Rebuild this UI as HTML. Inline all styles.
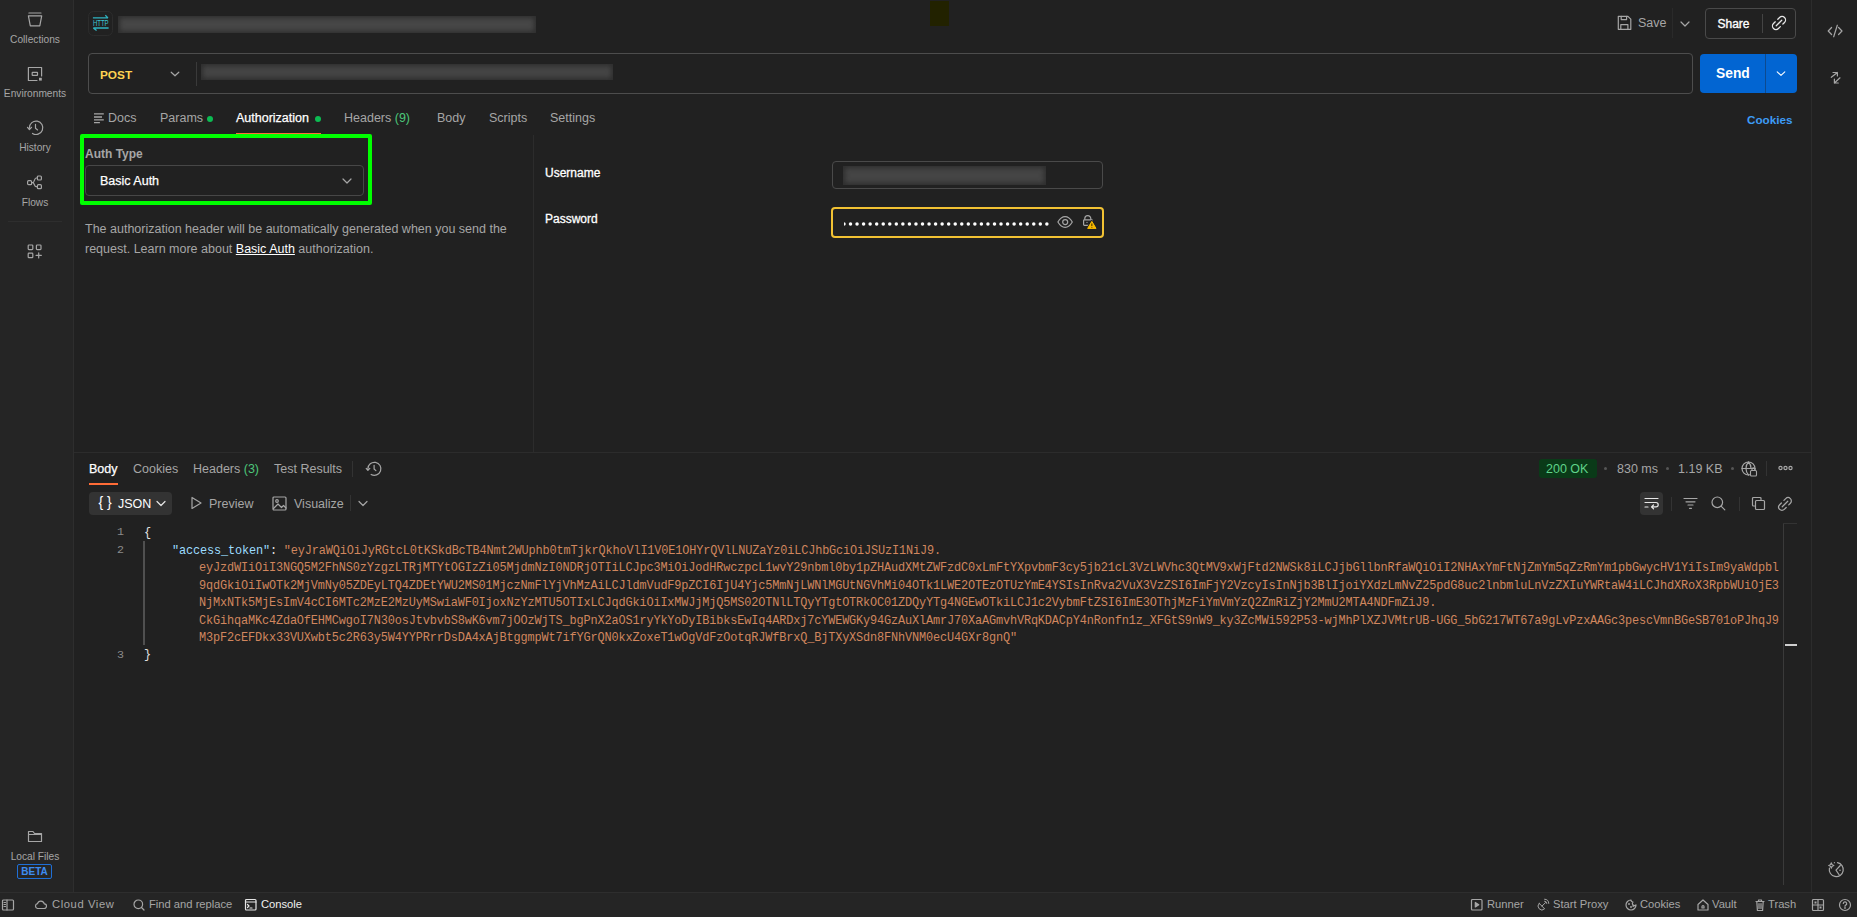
<!DOCTYPE html>
<html><head><meta charset="utf-8">
<style>
*{box-sizing:border-box;margin:0;padding:0}
html,body{width:1857px;height:917px;overflow:hidden;background:#212121;font-family:"Liberation Sans",sans-serif;color:#a6a6a6}
.a{position:absolute;white-space:nowrap}
svg.i{position:absolute;overflow:visible}
.ic{fill:none;stroke:#a6a6a6;stroke-width:1.2;stroke-linecap:round;stroke-linejoin:round}
.sb{font-size:10.2px;color:#a6a6a6;text-align:center;width:70px;left:0}
.tab{font-size:12.5px;top:111px;color:#a6a6a6}
.dot{width:6px;height:6px;border-radius:3px;background:#0cbb52;position:absolute}
.mono{font-family:"Liberation Mono",monospace;font-size:11.9px;letter-spacing:-0.145px;color:#d0865e;line-height:17.5px}
.ln{font-family:"Liberation Mono",monospace;font-size:11.67px;color:#8a8a8a;text-align:right;width:30px;left:94px;line-height:17.5px}
.st{font-size:11.2px;color:#a6a6a6;top:898px}
.blur{position:absolute;background:#3a3a3a;filter:blur(2px);border-radius:2px}
</style></head><body>
<!-- borders -->
<div class="a" style="left:0;top:0;width:73px;height:892px;background:#252525"></div>
<div class="a" style="left:0;top:892px;width:1857px;height:25px;background:#252525"></div>
<div class="a" style="left:73px;top:0;width:1px;height:892px;background:#2e2e2e"></div>
<div class="a" style="left:1811px;top:0;width:1px;height:892px;background:#2c2c2c"></div>
<div class="a" style="left:0;top:892px;width:1857px;height:1px;background:#2e2e2e"></div>

<!-- ===== LEFT SIDEBAR ===== -->
<svg class="i" style="left:27px;top:12px" width="16" height="16" viewBox="0 0 16 16"><g class="ic"><path d="M1.9 1h12.1M1.4 3.8h13.3l-1.9 10.1H3.3z"/></g></svg>
<div class="a sb" style="top:34px">Collections</div>
<svg class="i" style="left:27px;top:66px" width="16" height="16" viewBox="0 0 16 16"><g class="ic"><path d="M14.6 10V1.5H1.4v13H10"/><rect x="5.2" y="6.4" width="5.3" height="3" rx=".4"/></g><rect x="12" y="11.8" width="2.8" height="2.8" fill="#a6a6a6"/></svg>
<div class="a sb" style="top:88px">Environments</div>
<svg class="i" style="left:27px;top:120px" width="16" height="16" viewBox="0 0 16 16"><g class="ic"><path d="M2.4 7.8A6.7 6.7 0 1 1 5.5 13.4"/><path d="M.5 7.3l1.9 2.2 2.1-2.2"/><path d="M8.5 4.4v3.9l2.1 1.6"/></g></svg>
<div class="a sb" style="top:142px">History</div>
<svg class="i" style="left:27px;top:174px" width="16" height="16" viewBox="0 0 16 16"><g class="ic"><rect x="0.6" y="6.7" width="4" height="4" rx="1"/><rect x="10.4" y="2" width="4" height="4" rx="1"/><rect x="10.4" y="10.7" width="4" height="4" rx="1"/><path d="M4.6 8.7h1.2c1.6 0 1.6-4.7 3.2-4.7h1.4M5.8 8.7c1.6 0 1.6 4 3.2 4h1.4"/></g></svg>
<div class="a sb" style="top:197px">Flows</div>
<div class="a" style="left:8px;top:221px;width:54px;height:1px;background:#2e2e2e"></div>
<svg class="i" style="left:27px;top:243px" width="16" height="16" viewBox="0 0 16 16"><g class="ic"><rect x="1.2" y="2" width="4.6" height="4.6" rx=".8"/><rect x="9.4" y="2" width="4.6" height="4.6" rx=".8"/><rect x="1.2" y="10.1" width="4.6" height="4.6" rx=".8"/><path d="M11.7 9.8v5.2M9.1 12.4h5.2"/></g></svg>

<svg class="i" style="left:27px;top:828px" width="16" height="16" viewBox="0 0 16 16"><g class="ic"><path d="M1.5 3.5v10h13V5.5H7.5L6 3.5z M1.5 6.5h13"/></g></svg>
<div class="a sb" style="top:851px">Local Files</div>
<div class="a" style="left:17px;top:864px;width:35px;height:15px;border:1px solid #1f6fd6;border-radius:2px;color:#3d8cf0;font-size:10px;font-weight:bold;text-align:center;line-height:13px">BETA</div>

<!-- ===== RIGHT SIDEBAR ===== -->
<svg class="i" style="left:1827px;top:23px" width="16" height="16" viewBox="0 0 16 16"><g class="ic"><path d="M4.6 4.5L1.2 8l3.4 3.5M11.6 4.5L15 8l-3.4 3.5M10.3 2.2L6.7 13.8"/></g></svg>
<svg class="i" style="left:1827px;top:69px" width="16" height="16" viewBox="0 0 16 16"><g class="ic"><path d="M6 3.5h4.4v3.5M10.4 3.5L4.3 8.3M7.4 10V14H11.3M7.4 14L13 8.8"/></g></svg>
<svg class="i" style="left:1827px;top:861px" width="16" height="16" viewBox="0 0 16 16"><g class="ic"><path d="M10.5 1.7A7 7 0 1 1 2.4 7.2"/><path d="M13.3 4.5L9 9.2l3.3 4.8"/><path d="M4.3 1.9Q4.6 4.2 6.9 4.5 4.6 4.8 4.3 7.1 4 4.8 1.7 4.5 4 4.2 4.3 1.9z"/></g><circle cx="13" cy="9.2" r=".8" fill="#a6a6a6"/><circle cx="7.4" cy="1.7" r=".6" fill="#a6a6a6"/></svg>

<!-- ===== STATUS BAR ===== -->
<svg class="i" style="left:2px;top:899px" width="12" height="12" viewBox="0 0 12 12"><g class="ic"><rect x="0.5" y="1" width="11" height="10" rx="1"/><path d="M5 1v10M2 3.5h1.5M2 5.5h1.5M2 7.5h1.5"/></g></svg>
<svg class="i" style="left:34px;top:899px" width="13" height="12" viewBox="0 0 13 12"><g class="ic"><path d="M3.5 9.5h6.5a2.3 2.3 0 0 0 .3-4.6A3.5 3.5 0 0 0 3.5 4.6 2.5 2.5 0 0 0 3.5 9.5z"/></g></svg>
<div class="a st" style="left:52px;letter-spacing:0.6px">Cloud View</div>
<svg class="i" style="left:133px;top:899px" width="12" height="12" viewBox="0 0 12 12"><g class="ic"><circle cx="5.3" cy="5.3" r="4.3"/><path d="M8.5 8.5l2.5 2.5"/></g></svg>
<div class="a st" style="left:149px">Find and replace</div>
<svg class="i" style="left:245px;top:899px" width="12" height="12" viewBox="0 0 12 12"><g class="ic" style="stroke:#e6e6e6"><rect x="0.5" y="0.5" width="10.5" height="10.5" rx="1"/><path d="M0.5 3h10.5M2.5 5.5l1.5 1.5-1.5 1.5M5 9h2"/></g></svg>
<div class="a st" style="left:261px;color:#f0f0f0">Console</div>

<svg class="i" style="left:1471px;top:899px" width="12" height="12" viewBox="0 0 12 12"><g class="ic"><rect x="0.5" y="0.5" width="10.5" height="10.5" rx="1"/><path d="M4.3 3.5v4.5l3.5-2.2z" fill="#a6a6a6"/></g></svg>
<div class="a st" style="left:1487px">Runner</div>
<svg class="i" style="left:1538px;top:898px" width="12" height="12" viewBox="0 0 12 12"><g class="ic" style="stroke-width:1"><path d="M1.2 5.4L6.6 10.8A3.8 3.8 0 0 1 1.2 5.4z"/><path d="M4 8.1L7.6 4.5"/><path d="M6.6 1.2A4.3 4.3 0 0 1 10.8 5.4M6.6 3.2A2.3 2.3 0 0 1 8.8 5.4"/></g></svg>
<div class="a st" style="left:1553px">Start Proxy</div>
<svg class="i" style="left:1625px;top:899px" width="12" height="12" viewBox="0 0 12 12"><g class="ic"><path d="M11 6A5 5 0 1 1 6 1a2 2 0 0 0 2 2 2 2 0 0 0 3 3z"/><circle cx="4" cy="5" r=".4"/><circle cx="6" cy="8" r=".4"/><circle cx="8.3" cy="7" r=".4"/></g></svg>
<div class="a st" style="left:1640px">Cookies</div>
<svg class="i" style="left:1697px;top:899px" width="12" height="12" viewBox="0 0 12 12"><g class="ic"><path d="M1 11V5.5L6 1l5 4.5V11z"/><path d="M5 7.5a1 1 0 0 1 2 0V9H5z"/></g></svg>
<div class="a st" style="left:1712px">Vault</div>
<svg class="i" style="left:1754px;top:899px" width="12" height="12" viewBox="0 0 12 12"><g class="ic"><path d="M2 2.5h8M4.5 2.5V1h3v1.5M2.8 2.5l.6 9h5.2l.6-9M5 4.5v5M7 4.5v5"/></g></svg>
<div class="a st" style="left:1768px">Trash</div>
<svg class="i" style="left:1812px;top:899px" width="12" height="12" viewBox="0 0 12 12"><g class="ic"><rect x="0.5" y="0.5" width="11" height="11" rx="1"/><path d="M6 0.5v11M0.5 6h11"/></g><rect x="2.5" y="2.5" width="2" height="2" fill="#a6a6a6"/><rect x="7.5" y="7.5" width="2" height="2" fill="#a6a6a6"/></svg>
<svg class="i" style="left:1839px;top:899px" width="12" height="12" viewBox="0 0 12 12"><g class="ic"><circle cx="6" cy="6" r="5.5"/><path d="M4.3 4.5a1.7 1.7 0 1 1 2.4 1.6c-.5.3-.7.6-.7 1.2"/><circle cx="6" cy="9" r=".3"/></g></svg>
<!-- ===== HEADER ===== -->
<svg class="i" style="left:88px;top:11px" width="25" height="25" viewBox="0 0 25 25"><rect x="0.5" y="0.5" width="24" height="24" rx="5" fill="none" stroke="#2c2c2c"/><g fill="none" stroke="#2fb4c2" stroke-width="1.3"><path d="M4.9 6.9H20M17.3 4.3L20 6.9M5.3 17H20.6M5.3 17l3.3 2.6"/></g><text x="4.9" y="15.2" font-family="Liberation Sans" font-size="8.4" fill="#3cc6d4" textLength="15.7" lengthAdjust="spacingAndGlyphs">HTTP</text></svg>
<div class="a" style="left:118px;top:16px;width:418px;height:17px;background:#474747;box-shadow:inset 0 0 5px 2px #2e2e2e"></div>
<div class="a" style="left:930px;top:1px;width:19px;height:25px;background:#222200"></div>

<svg class="i" style="left:1617px;top:15px" width="15" height="15" viewBox="0 0 15 15"><g class="ic"><path d="M1.3 1.3h9.6l2.9 2.9v10.1H1.3z"/><path d="M4.2 1.3v3.3h5.4V1.3M3.8 14.3V9.6h7.1v4.7"/></g></svg>
<div class="a" style="left:1638px;top:16px;font-size:12.5px;color:#a6a6a6">Save</div>
<div class="a" style="left:1672px;top:8px;width:1px;height:30px;background:#2a2a2a"></div>
<svg class="i" style="left:1679.5px;top:19.5px" width="10" height="8" viewBox="0 0 10 8"><path class="ic" d="M1 2l4 4 4-4"/></svg>
<div class="a" style="left:1705px;top:8px;width:91px;height:31px;border:1px solid #4a4a4a;border-radius:4px"></div>
<div class="a" style="left:1717.5px;top:16.5px;font-size:12px;color:#ffffff;-webkit-text-stroke:0.35px #fff">Share</div>
<div class="a" style="left:1762px;top:13.5px;width:1px;height:19.5px;background:#444"></div>
<svg class="i" style="left:1769.3px;top:13.2px" width="20" height="20" viewBox="0 0 20 20"><path d="M-1.8 -3.5H-4.3A3.5 3.5 0 0 0 -4.3 3.5H-1.6M1.8 -3.5H4.3A3.5 3.5 0 0 1 4.3 3.5H2M-3.9 0H3.9" transform="translate(10 10) rotate(-45)" fill="none" stroke="#e6e6e6" stroke-width="1.25" stroke-linecap="round"/></svg>

<!-- ===== URL BAR ===== -->
<div class="a" style="left:88px;top:53px;width:1605px;height:41px;border:1px solid #4d4d4d;border-radius:4px"></div>
<div class="a" style="left:100px;top:68px;font-size:11.8px;font-weight:bold;color:#ffd452">POST</div>
<svg class="i" style="left:169.5px;top:70px" width="10" height="8" viewBox="0 0 10 8"><path class="ic" d="M1.2 2.2l3.8 3.6 3.8-3.6"/></svg>
<div class="a" style="left:196px;top:62px;width:1px;height:24px;background:#3a3a3a"></div>
<div class="a" style="left:201px;top:64px;width:412px;height:16px;background:#454545;box-shadow:inset 0 0 5px 2px #2e2e2e"></div>
<div class="a" style="left:1700px;top:54px;width:97px;height:39px;background:#0265d2;border-radius:4px"></div>
<div class="a" style="left:1765px;top:54px;width:1px;height:39px;background:#0d4a8f"></div>
<div class="a" style="left:1716px;top:65.5px;font-size:13.8px;font-weight:bold;color:#ffffff">Send</div>
<svg class="i" style="left:1776px;top:70px" width="10" height="8" viewBox="0 0 10 8"><path d="M1.2 1.8l3.8 3.6 3.8-3.6" fill="none" stroke="#fff" stroke-width="1.1" stroke-linecap="round" stroke-linejoin="round"/></svg>

<!-- ===== REQUEST TABS ===== -->
<svg class="i" style="left:93px;top:113px" width="12" height="12" viewBox="0 0 12 12"><g fill="none" stroke="#a6a6a6" stroke-width="1.3"><path d="M1 0.9h9.8M1 4h8M1 6.8h9.8M1 9.7h5.9"/></g></svg>
<div class="a tab" style="left:108px">Docs</div>
<div class="a tab" style="left:160px">Params</div>
<div class="dot" style="left:206.7px;top:115.5px"></div>
<div class="a tab" style="left:236px;color:#ffffff;-webkit-text-stroke:0.25px #fff">Authorization</div>
<div class="dot" style="left:315px;top:115.5px"></div>
<div class="a" style="left:236px;top:132.6px;width:85px;height:1.6px;background:#ff6c37"></div>
<div class="a tab" style="left:344px">Headers <span style="color:#4cc77a">(9)</span></div>
<div class="a tab" style="left:437px">Body</div>
<div class="a tab" style="left:489px">Scripts</div>
<div class="a tab" style="left:550px">Settings</div>
<div class="a tab" style="left:1747px;top:113px;font-size:11.7px;color:#3d9bf5;font-weight:bold">Cookies</div>

<!-- ===== AUTH PANEL ===== -->
<div class="a" style="left:533px;top:135px;width:1px;height:317px;background:#2c2c2c"></div>
<div class="a" style="left:79.5px;top:134px;width:292px;height:71px;border:4px solid #00ff00;border-radius:2px"></div>
<div class="a" style="left:85px;top:146.5px;font-size:12px;font-weight:bold;color:#a6a6a6">Auth Type</div>
<div class="a" style="left:85px;top:165px;width:279px;height:31px;border:1px solid #474747;border-radius:4px"></div>
<div class="a" style="left:100px;top:174px;font-size:12.5px;color:#ffffff;-webkit-text-stroke:0.25px #fff">Basic Auth</div>
<svg class="i" style="left:342px;top:177px" width="10" height="8" viewBox="0 0 10 8"><path class="ic" d="M1 2l4 4 4-4"/></svg>
<div class="a" style="left:85px;top:219px;font-size:12.5px;line-height:20px;color:#a6a6a6">The authorization header will be automatically generated when you send the<br>request. Learn more about <span style="color:#fff;text-decoration:underline">Basic Auth</span> authorization.</div>

<div class="a" style="left:545px;top:166px;font-size:12px;color:#ffffff;-webkit-text-stroke:0.3px #fff">Username</div>
<div class="a" style="left:832px;top:161px;width:271px;height:28px;border:1px solid #4a4a4a;border-radius:4px"></div>
<div class="a" style="left:843px;top:166px;width:203px;height:19px;background:#454545;box-shadow:inset 0 0 5px 2px #2e2e2e"></div>
<div class="a" style="left:545px;top:212px;font-size:12px;color:#ffffff;-webkit-text-stroke:0.3px #fff">Password</div>
<div class="a" style="left:831px;top:207px;width:273px;height:31px;border:2px solid #f2c233;border-radius:4px"></div>
<svg class="i" style="left:844px;top:220.5px;overflow:hidden" width="210" height="6" viewBox="0 0 210 6"><g fill="#fff"><circle cx="0" cy="3" r="1.75"/><circle cx="6.50" cy="3" r="1.75"/><circle cx="13.04" cy="3" r="1.75"/><circle cx="19.59" cy="3" r="1.75"/><circle cx="26.13" cy="3" r="1.75"/><circle cx="32.68" cy="3" r="1.75"/><circle cx="39.23" cy="3" r="1.75"/><circle cx="45.77" cy="3" r="1.75"/><circle cx="52.31" cy="3" r="1.75"/><circle cx="58.86" cy="3" r="1.75"/><circle cx="65.41" cy="3" r="1.75"/><circle cx="71.95" cy="3" r="1.75"/><circle cx="78.50" cy="3" r="1.75"/><circle cx="85.04" cy="3" r="1.75"/><circle cx="91.58" cy="3" r="1.75"/><circle cx="98.13" cy="3" r="1.75"/><circle cx="104.67" cy="3" r="1.75"/><circle cx="111.22" cy="3" r="1.75"/><circle cx="117.77" cy="3" r="1.75"/><circle cx="124.31" cy="3" r="1.75"/><circle cx="130.86" cy="3" r="1.75"/><circle cx="137.40" cy="3" r="1.75"/><circle cx="143.94" cy="3" r="1.75"/><circle cx="150.49" cy="3" r="1.75"/><circle cx="157.03" cy="3" r="1.75"/><circle cx="163.58" cy="3" r="1.75"/><circle cx="170.12" cy="3" r="1.75"/><circle cx="176.67" cy="3" r="1.75"/><circle cx="183.22" cy="3" r="1.75"/><circle cx="189.76" cy="3" r="1.75"/><circle cx="196.31" cy="3" r="1.75"/><circle cx="202.85" cy="3" r="1.75"/></g></svg>
<svg class="i" style="left:1057px;top:214.5px" width="16" height="14" viewBox="0 0 16 14"><g class="ic"><path d="M.9 7C3 3.4 5.3 1.7 8.1 1.7S13.2 3.4 15.3 7C13.2 10.6 10.9 12.3 8.1 12.3S3 10.6 .9 7z"/><circle cx="8.2" cy="7.1" r="2.5"/></g></svg>
<svg class="i" style="left:1081px;top:214px" width="16" height="16" viewBox="0 0 16 16"><g class="ic"><path d="M3.8 5.3V4.6a3 3 0 0 1 6 0V5.3"/><rect x="2.6" y="5.9" width="8.8" height="5.4" rx=".8"/></g><circle cx="6" cy="8.4" r=".6" fill="#a6a6a6"/><path d="M10.85 7.4L15 14.4H6.7z" fill="#f5b800" stroke="#212121" stroke-width="2.6" stroke-linejoin="round" paint-order="stroke"/><path d="M10.85 7.4L15 14.4H6.7z" fill="#f5b800" stroke="#f5b800" stroke-width="1" stroke-linejoin="round"/><path d="M10.85 9.5v2.5" stroke="#3a2a00" stroke-width="1"/><circle cx="10.85" cy="13.3" r=".5" fill="#3a2a00"/></svg>
<!-- ===== RESPONSE ===== -->
<div class="a" style="left:74px;top:452px;width:1737px;height:1px;background:#2c2c2c"></div>
<div class="a tab" style="left:89px;top:462px;color:#ffffff;-webkit-text-stroke:0.25px #fff">Body</div>
<div class="a" style="left:89px;top:483px;width:29px;height:2px;background:#ff6c37"></div>
<div class="a tab" style="left:133px;top:462px">Cookies</div>
<div class="a tab" style="left:193px;top:462px">Headers <span style="color:#4cc77a">(3)</span></div>
<div class="a tab" style="left:274px;top:462px">Test Results</div>
<div class="a" style="left:352px;top:461px;width:1px;height:16px;background:#333"></div>
<svg class="i" style="left:366px;top:461px" width="16" height="16" viewBox="0 0 16 16"><g class="ic"><path d="M1.9 7.8A6.5 6.5 0 1 1 5.15 13.43"/><path d="M0.2 7.4l1.7 2 1.9-2" /><path d="M8.1 4.3V8l1.8 1.6"/></g></svg>

<div class="a" style="left:1539px;top:459px;width:58px;height:19px;background:#0a3a18;border-radius:3px"></div>
<div class="a" style="left:1546px;top:462px;font-size:12.5px;color:#5fd38a">200 OK</div>
<div class="a" style="left:1604px;top:467px;width:3px;height:3px;border-radius:2px;background:#555"></div>
<div class="a" style="left:1617px;top:462px;font-size:12.5px;color:#a6a6a6">830 ms</div>
<div class="a" style="left:1666px;top:467px;width:3px;height:3px;border-radius:2px;background:#555"></div>
<div class="a" style="left:1678px;top:462px;font-size:12.5px;color:#a6a6a6">1.19 KB</div>
<div class="a" style="left:1731px;top:467px;width:3px;height:3px;border-radius:2px;background:#555"></div>
<svg class="i" style="left:1741px;top:461px" width="17" height="16" viewBox="0 0 17 16"><g class="ic"><circle cx="7.5" cy="7.5" r="6.5"/><path d="M1 7.5h13M7.5 1c-2 2-2.5 4-2.5 6.5S5.5 12 7.5 14M7.5 1c2 2 2.5 4 2.5 6.5"/></g><rect x="9.5" y="9.5" width="6" height="5.5" rx="1" fill="#212121" stroke="#a6a6a6" stroke-width="1.1"/><path d="M11 9.5V8.3a1.5 1.5 0 0 1 3 0v1.2" fill="none" stroke="#a6a6a6" stroke-width="1.1"/></svg>
<div class="a" style="left:1766px;top:461px;width:1px;height:15px;background:#333"></div>
<svg class="i" style="left:1778px;top:465px" width="15" height="6" viewBox="0 0 15 6"><g class="ic"><circle cx="2.5" cy="3" r="1.6"/><circle cx="7.5" cy="3" r="1.6"/><circle cx="12.5" cy="3" r="1.6"/></g></svg>

<!-- response toolbar -->
<div class="a" style="left:89px;top:492px;width:83px;height:23px;background:#333333;border-radius:4px"></div>
<div class="a" style="left:98.5px;top:494px;font-size:14px;color:#ffffff">{ }</div>
<div class="a" style="left:118px;top:497px;font-size:12.5px;color:#ffffff">JSON</div>
<svg class="i" style="left:156px;top:500px" width="10" height="7" viewBox="0 0 10 7"><path class="ic" style="stroke:#e6e6e6" d="M1 1.5l4 4 4-4"/></svg>
<svg class="i" style="left:190px;top:496px" width="13" height="14" viewBox="0 0 13 14"><path class="ic" d="M2 1.5v11l9-5.5z"/></svg>
<div class="a" style="left:209px;top:497px;font-size:12.5px;color:#a6a6a6">Preview</div>
<svg class="i" style="left:272px;top:496px" width="15" height="15" viewBox="0 0 15 15"><g class="ic"><rect x="1" y="1" width="13" height="13" rx="1"/><circle cx="5" cy="5" r="1.3"/><path d="M1.5 12.5l4.5-4.5 3.5 3.5 2-2 2.5 2.5"/></g></svg>
<div class="a" style="left:294px;top:497px;font-size:12.5px;color:#a6a6a6">Visualize</div>
<div class="a" style="left:350px;top:495px;width:1px;height:16px;background:#333"></div>
<svg class="i" style="left:358px;top:500px" width="10" height="7" viewBox="0 0 10 7"><path class="ic" d="M1 1.5l4 4 4-4"/></svg>

<div class="a" style="left:1640px;top:492px;width:23px;height:23px;background:#333333;border-radius:4px"></div>
<svg class="i" style="left:1644px;top:497px" width="15" height="13" viewBox="0 0 15 13"><g class="ic" style="stroke:#e6e6e6"><path d="M1 1.5h13M1 5.5h11a2.2 2.2 0 0 1 0 4.4H7.5M9.5 8l-2 1.9 2 1.9M1 10h3"/></g></svg>
<div class="a" style="left:1671px;top:497px;width:1px;height:14px;background:#333"></div>
<svg class="i" style="left:1683px;top:497px" width="15" height="13" viewBox="0 0 15 13"><g class="ic"><path d="M1 1.5h13M3 4.8h9M5 8h5M6.5 11.3h2"/></g></svg>
<svg class="i" style="left:1711px;top:496px" width="15" height="15" viewBox="0 0 15 15"><g class="ic"><circle cx="6.3" cy="6.3" r="5.3"/><path d="M10.3 10.3l3.5 3.5"/></g></svg>
<div class="a" style="left:1739px;top:497px;width:1px;height:14px;background:#333"></div>
<svg class="i" style="left:1751px;top:496px" width="15" height="15" viewBox="0 0 15 15"><g class="ic"><path d="M10 3.5V2.5a1 1 0 0 0-1-1H2.5a1 1 0 0 0-1 1V9a1 1 0 0 0 1 1h1"/><rect x="4.5" y="4.5" width="9" height="9" rx="1"/></g></svg>
<svg class="i" style="left:1775px;top:493.6px" width="20" height="20" viewBox="0 0 20 20"><path d="M-1.8 -3.3H-4.3A3.3 3.3 0 0 0 -4.3 3.3H-1.6M1.8 -3.3H4.3A3.3 3.3 0 0 1 4.3 3.3H2M-3.9 0H3.9" transform="translate(10 10) rotate(-45)" fill="none" stroke="#a6a6a6" stroke-width="1.25" stroke-linecap="round"/></svg>

<!-- code -->
<div class="a ln" style="top:524px">1<br>2<br><br><br><br><br><br>3</div>
<div class="a" style="left:143px;top:541px;width:2px;height:104px;background:#505050"></div>
<div class="a mono" style="left:144px;top:525px;color:#e0e0e0">{</div>
<div class="a mono" style="left:172px;top:542.5px"><span style="color:#9cdcfe">"access_token"</span><span style="color:#e0e0e0">: </span>"eyJraWQiOiJyRGtcL0tKSkdBcTB4Nmt2WUphb0tmTjkrQkhoVlI1V0E1OHYrQVlLNUZaYz0iLCJhbGciOiJSUzI1NiJ9.</div>
<div class="a mono" style="left:199px;top:560px">eyJzdWIiOiI3NGQ5M2FhNS0zYzgzLTRjMTYtOGIzZi05MjdmNzI0NDRjOTIiLCJpc3MiOiJodHRwczpcL1wvY29nbml0by1pZHAudXMtZWFzdC0xLmFtYXpvbmF3cy5jb21cL3VzLWVhc3QtMV9xWjFtd2NWSk8iLCJjbGllbnRfaWQiOiI2NHAxYmFtNjZmYm5qZzRmYm1pbGwycHV1YiIsIm9yaWdpbl<br>9qdGkiOiIwOTk2MjVmNy05ZDEyLTQ4ZDEtYWU2MS01MjczNmFlYjVhMzAiLCJldmVudF9pZCI6IjU4Yjc5MmNjLWNlMGUtNGVhMi04OTk1LWE2OTEzOTUzYmE4YSIsInRva2VuX3VzZSI6ImFjY2VzcyIsInNjb3BlIjoiYXdzLmNvZ25pdG8uc2lnbmluLnVzZXIuYWRtaW4iLCJhdXRoX3RpbWUiOjE3<br>NjMxNTk5MjEsImV4cCI6MTc2MzE2MzUyMSwiaWF0IjoxNzYzMTU5OTIxLCJqdGkiOiIxMWJjMjQ5MS02OTNlLTQyYTgtOTRkOC01ZDQyYTg4NGEwOTkiLCJ1c2VybmFtZSI6ImE3OThjMzFiYmVmYzQ2ZmRiZjY2MmU2MTA4NDFmZiJ9.<br>CkGihqaMKc4ZdaOfEHMCwgoI7N30osJtvbvbS8wK6vm7jOOzWjTS_bgPnX2aOS1ryYkYoDyIBibksEwIq4ARDxj7cYWEWGKy94GzAuXlAmrJ70XaAGmvhVRqKDACpY4nRonfn1z_XFGtS9nW9_ky3ZcMWi592P53-wjMhPlXZJVMtrUB-UGG_5bG217WT67a9gLvPzxAAGc3pescVmnBGeSB701oPJhqJ9<br>M3pF2cEFDkx33VUXwbt5c2R63y5W4YYPRrrDsDA4xAjBtggmpWt7ifYGrQN0kxZoxeT1wOgVdFzOotqRJWfBrxQ_BjTXyXSdn8FNhVNM0ecU4GXr8gnQ"</div>
<div class="a mono" style="left:144px;top:647px;color:#e0e0e0">}</div>
<div class="a" style="left:1783px;top:523px;width:1px;height:362px;background:#3a3a3a"></div>
<div class="a" style="left:1783px;top:523px;width:14px;height:1px;background:#333"></div>
<div class="a" style="left:1785px;top:644px;width:12px;height:2px;background:#cfcfcf"></div>
</body></html>
